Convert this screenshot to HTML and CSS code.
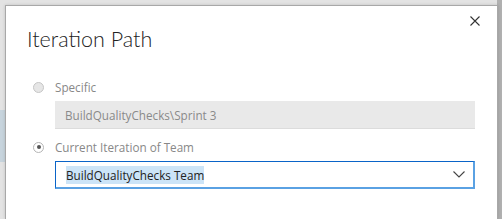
FILE: index.html
```html
<!DOCTYPE html>
<html>
<head>
<meta charset="utf-8">
<link rel="stylesheet" href="styles.css">
</head>
<body>
<div class="backdrop">
  <div class="dialog">
    <button class="close" aria-label="Close">
      <svg width="10" height="10" viewBox="0 0 10 10"><path d="M0.5 0.5L9.5 9.5M9.5 0.5L0.5 9.5" stroke="#333" stroke-width="1.1" fill="none"/></svg>
    </button>
    <h1 class="title">Iteration Path</h1>
    <div class="option disabled">
      <span class="radio"></span>
      <span class="label">Specific</span>
    </div>
    <div class="field field-disabled">BuildQualityChecks\Sprint 3</div>
    <div class="option">
      <span class="radio checked"></span>
      <span class="label">Current Iteration of Team</span>
    </div>
    <div class="field field-select">
      <span class="selected-text">BuildQualityChecks Team</span>
      <svg class="chevron" width="12" height="7" viewBox="0 0 12 7"><path d="M0.5 0.5L6 6L11.5 0.5" stroke="#444" stroke-width="1.1" fill="none"/></svg>
    </div>
  </div>
</div>
</body>
</html>
```
FILE: styles.css
```css
html, body {
  margin: 0;
  padding: 0;
}
body {
  width: 502px;
  height: 219px;
  overflow: hidden;
  font-family: "Open Sans", "Noto Sans", sans-serif;
  background: #e3e3e3;
}
.backdrop {
  height: 219px;
  padding: 5px 4px 0 5px;
  box-sizing: border-box;
  background:
    linear-gradient(#c7d4dd, #c7d4dd) 0 110px / 5px 52px no-repeat,
    linear-gradient(to right, #e3e3e3 0, #e3e3e3 497px, #b0b0b0 497px, #b0b0b0 502px) 0 0 / 502px 219px no-repeat;
}
.dialog {
  position: relative;
  background: #fff;
  border: 1px solid #a8a8a8;
  border-bottom: none;
  height: 214px;
  box-sizing: border-box;
  padding: 19px 22px 0 21px;
  box-shadow: 0 0 3px rgba(0,0,0,0.15);
}
.close {
  position: absolute;
  top: 10px;
  right: 17px;
  border: none;
  background: none;
  padding: 0;
  width: 10px;
  height: 10px;
  display: flex;
}
.title {
  margin: 0 0 25px 0;
  font-family: "Lato", "Open Sans", sans-serif;
  font-weight: 300;
  font-size: 21.5px;
  line-height: 28px;
  color: #222;
}
.option {
  display: flex;
  align-items: center;
  gap: 11px;
  height: 18px;
  padding-left: 6px;
  margin-bottom: 5px;
}
.radio {
  width: 11px;
  height: 11px;
  border-radius: 50%;
  border: 1px solid #c6c6c6;
  background: #e6e6e6;
  box-sizing: border-box;
  position: relative;
}
.radio.checked {
  background: #fff;
  border-color: #b5b5b5;
}
.radio.checked::after {
  content: "";
  position: absolute;
  left: 2.5px;
  top: 2.5px;
  width: 4px;
  height: 4px;
  border-radius: 50%;
  background: #555;
}
.label {
  font-size: 11.7px;
  color: #888;
}
.field {
  margin-left: 28px;
  height: 28px;
  box-sizing: border-box;
  display: flex;
  align-items: center;
  padding-left: 10px;
  font-size: 11.7px;
}
.field-disabled {
  background: #e9e9e9;
  color: #8a8a8a;
  border-bottom: 1px solid #dcdcdc;
  margin-bottom: 9px;
}
.field-select {
  border: 1px solid #0a64c8;
  border-bottom: 2px solid #5aa1e3;
  border-right: 2px solid #5aa1e3;
  color: #222;
  justify-content: space-between;
  padding-right: 8px;
  margin-top: 1px;
}
.selected-text {
  background: #cce4f7;
  line-height: 18px;
}
.chevron {
  display: block;
}
```
